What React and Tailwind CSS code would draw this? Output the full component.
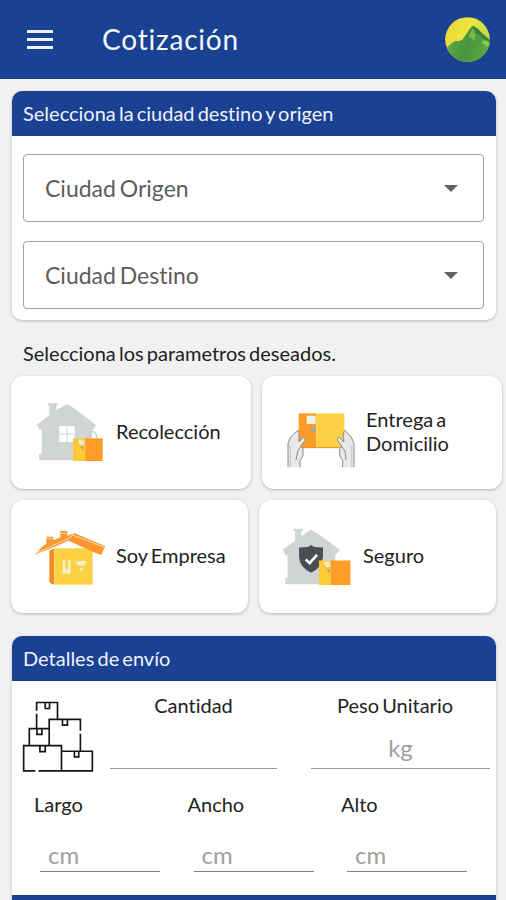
import { useState } from 'react';
import { clsx } from 'clsx';

const cities = ['Ciudad Origen', 'Ciudad Destino'];

const MountainLogo = () => (
  <svg viewBox="0 0 135 135" className="h-[45px] w-[45px]">
    <defs>
      <linearGradient id="sky" x1="0" y1="0" x2="1" y2="0.6">
        <stop offset="0" stopColor="#e9d43a" />
        <stop offset="0.5" stopColor="#eee53f" />
        <stop offset="1" stopColor="#b5d343" />
      </linearGradient>
      <linearGradient id="hill" x1="0" y1="0" x2="1" y2="0.3">
        <stop offset="0" stopColor="#6cb33c" />
        <stop offset="0.6" stopColor="#459440" />
        <stop offset="1" stopColor="#5aa63c" />
      </linearGradient>
      <clipPath id="disc">
        <circle cx="67.5" cy="67.5" r="67" />
      </clipPath>
    </defs>
    <g clipPath="url(#disc)">
      <rect width="135" height="135" fill="url(#sky)" />
      <path d="M0 96L24 76L32 71L40 73L52 68L76 33L84 26L98 35L114 52L135 70V135H0Z" fill="url(#hill)" />
      <path d="M84 26L98 35L114 52L135 70V78L116 66L104 54L96 50L88 36Z" fill="#34803f" />
      <path d="M84 34L88 46L93 56L89 62L90 70L84 71L80 62L74 64L72 58L77 46Z" fill="#79bd43" />
      <path d="M116 70L130 72L133 84L124 90L119 82L110 80Z" fill="#8ac73f" />
    </g>
  </svg>
);

const HousePickupIcon = () => (
  <svg viewBox="105 95 210 180" className="-mt-[2px] h-[60px] w-[70px]">
    <path d="M144 99H172V106H169V119L177 115L200 101L218 111L288 164L281 176L276 178V270H117V250H125V177H119L110 164L148 134V106H144Z" fill="#d1d4d4" />
    <rect x="178" y="167" width="46" height="48" fill="#fff" />
    <path d="M201 167V215M178 191H224" stroke="#d1d4d4" strokeWidth="3" />
    <path d="M268 204V190Q270 182 279 184Q291 187 290 204" fill="none" stroke="#c9cccc" strokeWidth="4" />
    <rect x="219" y="204" width="37" height="68" fill="#fecb35" />
    <rect x="256" y="204" width="52" height="68" fill="#fe9d25" />
    <path d="M235 208H251V223H241L235 217Z" fill="#eee8cf" />
    <path d="M241 228H251V242L246 237Z" fill="#b8a878" />
  </svg>
);

const HandsBoxIcon = () => (
  <svg viewBox="97 123 210 174" className="h-[58px] w-[70px]">
    <rect x="135" y="130" width="53" height="104" fill="#fb9d26" />
    <rect x="188" y="130" width="84" height="104" fill="#fdd045" />
    <path d="M135 233H272" stroke="#ee8e30" strokeWidth="3" />
    <rect x="159" y="137" width="27" height="25" fill="#f2eee4" />
    <rect x="170" y="171" width="17" height="15" fill="#b7a186" />
    <g fill="#e8eaea" stroke="#85898a" strokeWidth="3" strokeLinejoin="round">
      <path d="M103 292V220L112 200L133 181L136 186V216L149 202Q156 203 155 210L141 229L148 236V258L139 272V292" />
      <path d="M301 292V220L292 200L273 181L270 186V216L257 202Q250 203 251 210L265 229L258 236V258L267 272V292" />
    </g>
    <path d="M127 270L132 244L141 230M277 270L274 244L265 230" fill="none" stroke="#85898a" strokeWidth="3" />
    <path d="M110 292V226M294 292V226" stroke="#c3c7c7" strokeWidth="3" />
  </svg>
);

const BoxHouseIcon = () => (
  <svg viewBox="101 101 216 174" className="mt-[2px] h-[58px] w-[72px]">
    <path d="M147 166L163 159V268L154 266L147 259Z" fill="#f88c20" />
    <path d="M163 159H277V269H163Z" fill="#fdd144" />
    <path d="M163 161V268H275" fill="none" stroke="#ffe58b" strokeWidth="3" />
    <path d="M103 178L130 150L138 146V124H159V135L180 126V107H201V121L217 115L208 134L170 151Z" fill="#fa962d" />
    <path d="M221 113L314 152L303 178L285 173L205 136Z" fill="#fa962d" />
    <path d="M108 173L160 149L206 129L217 119L311 155M138 130H160M180 114H201" fill="none" stroke="#ffdcae" strokeWidth="3" />
    <g fill="none" stroke="#f5efd5" strokeWidth="7">
      <path d="M191 196V226H207V196M187 198H195M203 198H211M187 231H211" />
      <path d="M226 201H257M231 207H252M238 222H248" />
    </g>
  </svg>
);

const InsuranceIcon = () => (
  <svg viewBox="85 95 216 178" className="h-[59px] w-[72px]">
    <path d="M122 100H150V107H146V122L174 103L192 113L262 164L253 176L248 178V268H97V248H104V180H98L89 164L127 137V107H122Z" fill="#d1d4d4" />
    <path d="M139 157L157 156Q169 156 175 149Q182 156 194 156L211 157V185Q210 217 175 233Q140 217 139 185Z" fill="#4b4e50" />
    <path d="M159 193L171 204L193 179" fill="none" stroke="#fff" strokeWidth="8" />
    <rect x="199" y="196" width="36" height="74" fill="#fecb35" />
    <rect x="235" y="196" width="59" height="74" fill="#fe9d25" />
    <path d="M216 200H231V216H222L216 210Z" fill="#efead8" />
    <path d="M221 222H232V237L227 231Z" fill="#b8a878" />
  </svg>
);

const StackedBoxesIcon = () => (
  <svg viewBox="66 211 217 219" className="h-[73px] w-[72px]">
    <g fill="none" stroke="#151515" strokeWidth="5">
      <path d="M110 243V218H173V268M110 252V297" />
      <path d="M148 347V269H242V303M242 312V364" />
      <path d="M148 297H88V348" />
      <path d="M106 424H71V348H185V424H116" />
      <path d="M185 365H278V424H185" />
      <path d="M136 219V236H149V219M188 270V286H203V270M111 298V314H126V298M120 349V366H136V349M224 366V382H237V366" />
    </g>
  </svg>
);

const options = [
  { id: 'pickup', label: 'Recolección', Icon: HousePickupIcon, card: 'w-60 pl-6', text: 'ml-[11px] -mt-[3px]' },
  { id: 'delivery', label: 'Entrega a Domicilio', Icon: HandsBoxIcon, card: 'w-60 pl-6 pt-[14px]', text: 'ml-[10px] -mt-[17px] w-[100px]' },
  { id: 'company', label: 'Soy Empresa', Icon: BoxHouseIcon, card: 'w-[237px] pl-[23px]', text: 'ml-[10px] -mt-[3px]' },
  { id: 'insurance', label: 'Seguro', Icon: InsuranceIcon, card: 'w-[237px] pl-[22px]', text: 'ml-[10px] -mt-[3px]' },
];

const SectionHeader = ({ children }) => (
  <h2 className="flex h-[45px] items-center rounded-t-[10px] bg-[#1b4193] px-[11px] pb-0.5 text-[20px] text-[#edf2fc]">
    {children}
  </h2>
);

const CitySelect = ({ label }) => (
  <button className="flex h-[68px] w-full items-center justify-between rounded border border-[#a3a3a3] pl-[21px] pr-[25px] text-[23px] text-[#5d5d5d] [word-spacing:-2px]">
    {label}
    <svg viewBox="0 0 14 8" className="mt-0.5 h-2 w-[14px]">
      <path d="M0 0H14L7 7Z" fill="#626262" />
    </svg>
  </button>
);

const OptionCard = ({ option, selected, onClick }) => {
  const { label, Icon, card, text } = option;

  return (
    <button
      onClick={onClick}
      className={clsx(
        'flex h-[113px] shrink-0 items-center rounded-xl bg-white text-left shadow-[0_1px_3px_rgba(0,0,0,0.25)] [word-spacing:-2px]',
        card,
        selected && 'ring-2 ring-[#1b4193]'
      )}
    >
      <Icon />
      <span className={clsx('text-[20px] leading-6 text-[#222]', text)}>{label}</span>
    </button>
  );
};

const App = () => {
  const [selected, setSelected] = useState(null);

  const renderOption = (option) => (
    <OptionCard
      key={option.id}
      option={option}
      selected={selected === option.id}
      onClick={() => setSelected(selected === option.id ? null : option.id)}
    />
  );

  return (
    <div className="h-[900px] w-[506px] overflow-hidden bg-[#f1f1f1] font-['Lato',sans-serif] [font-variant-ligatures:none] [word-spacing:-2px]">
      {/* App bar */}
      <header className="flex h-[79px] items-center bg-[#1b4193] pl-[27px] pr-4">
        <button className="flex w-[26px] flex-col gap-[5px]">
          <span className="h-[3px] bg-[#edf1fb]" />
          <span className="h-[3px] bg-[#edf1fb]" />
          <span className="h-[3px] bg-[#edf1fb]" />
        </button>
        <h1 className="-mt-px ml-[49px] flex-1 text-[28px] tracking-[0.8px] text-[#f2f6ff]">Cotización</h1>
        <MountainLogo />
      </header>

      {/* Cities */}
      <section className="ml-3 mt-3 h-[229px] w-[484px] rounded-[10px] bg-white shadow-[0_1px_3px_rgba(0,0,0,0.25)]">
        <SectionHeader>Selecciona la ciudad destino y origen</SectionHeader>
        <div className="flex flex-col gap-[19px] pl-[11px] pr-3 pt-[18px]">
          {cities.map((city) => (
            <CitySelect key={city} label={city} />
          ))}
        </div>
      </section>

      {/* Parameters */}
      <p className="ml-[23px] mt-5 h-[36px] text-[20px] leading-[26px] text-[#222]">
        Selecciona los parametros deseados.
      </p>
      <div className="ml-[11px] flex gap-[11px]">{options.slice(0, 2).map(renderOption)}</div>
      <div className="ml-[11px] mt-[11px] flex gap-[11px]">{options.slice(2).map(renderOption)}</div>

      {/* Shipment details */}
      <section className="ml-3 mt-[23px] w-[484px] rounded-[10px] bg-white shadow-[0_1px_3px_rgba(0,0,0,0.25)]">
        <SectionHeader>Detalles de envío</SectionHeader>
        <div className="flex h-[88px] pl-[10px] pt-3 text-center text-[20px] leading-6 text-[#222]">
          <div className="pt-[7px]">
            <StackedBoxesIcon />
          </div>
          <label className="ml-4 h-[76px] w-[167px] border-b border-[#999]">Cantidad</label>
          <label className="ml-[34px] h-[76px] w-[179px] shrink-0 border-b border-[#999]">
            <span className="block pr-[11px]">Peso Unitario</span>
            <span className="mt-[19px] block text-[24px] text-[#a0a0a0]">kg</span>
          </label>
        </div>
        <div className="flex gap-[33.5px] pl-[28px] pt-[23px]">
          {['Largo', 'Ancho', 'Alto'].map((name) => (
            <label key={name} className="w-[120px] text-[20px] leading-6 text-[#222]">
              <span className="-ml-[6px] block">{name}</span>
              <span className="mt-[22px] block h-[34px] border-b border-[#808080] pl-2 text-[24px] leading-[34px] text-[#a0a0a0]">
                cm
              </span>
            </label>
          ))}
        </div>
        <div className="mt-[23px] h-6 bg-[#1b4193]" />
      </section>
    </div>
  );
};

export default App;
